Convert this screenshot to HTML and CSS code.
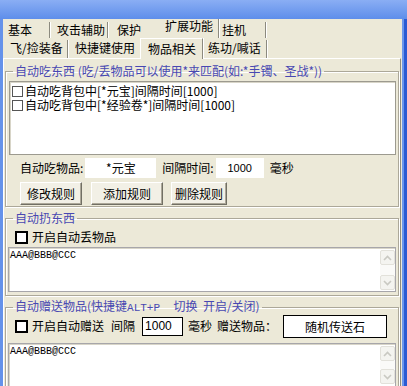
FILE: index.html
```html
<!DOCTYPE html>
<html lang="zh">
<head>
    <meta charset="UTF-8">
    <meta name="viewport" content="width=device-width, initial-scale=1.0">
    <title>物品相关</title>
    <link rel="stylesheet" href="styles.css">
</head>
<body>
    <div class="titlebar"></div>
    <div class="frame">
        <div class="tabs">
            <div class="tab-row back">
                <div class="tab t-basic">基本</div>
                <div class="tab t-attack">攻击辅助</div>
                <div class="tab t-guard">保护</div>
                <div class="tab t-ext">扩展功能</div>
                <div class="tab t-idle">挂机</div>
            </div>
            <div class="tab-row front">
                <div class="tab t-fly">飞/捡装备</div>
                <div class="tab t-hotkey">快捷键使用</div>
                <div class="tab t-items active">物品相关</div>
                <div class="tab t-train">练功/喊话</div>
            </div>
        </div>

        <div class="panel">
            <!-- 自动吃东西 -->
            <fieldset class="group group-eat">
                <legend>自动吃东西 (吃/丢物品可以使用*来匹配(如:*手镯、圣战*))</legend>
                <div class="listbox">
                    <div class="item"><span class="check-small"></span>自动吃背包中[*元宝]间隔时间[1000]</div>
                    <div class="item"><span class="check-small"></span>自动吃背包中[*经验卷*]间隔时间[1000]</div>
                </div>
                <div class="field-row">
                    <span class="lbl">自动吃物品:</span>
                    <span class="edit edit-item">*元宝</span>
                    <span class="lbl lbl-gap">间隔时间:</span>
                    <span class="edit edit-ms">1000</span>
                    <span class="lbl lbl-gap">毫秒</span>
                </div>
                <div class="button-row">
                    <button class="btn btn-edit">修改规则</button>
                    <button class="btn btn-add">添加规则</button>
                    <button class="btn btn-del">删除规则</button>
                </div>
            </fieldset>

            <!-- 自动扔东西 -->
            <fieldset class="group group-drop">
                <legend>自动扔东西</legend>
                <div class="check-row">
                    <span class="check-big"></span>
                    <span>开启自动丢物品</span>
                </div>
                <div class="memo memo-drop">
                    <div class="memo-text">AAA@BBB@CCC</div>
                    <div class="scrollbar">
                        <span class="sb-btn"><svg width="9" height="6" viewBox="0 0 9 6"><path d="M1 5 L4.5 1.5 L8 5" fill="none" stroke="#c9c9c2" stroke-width="1.6"/></svg></span>
                        <span class="sb-track"></span>
                        <span class="sb-btn"><svg width="9" height="6" viewBox="0 0 9 6"><path d="M1 1 L4.5 4.5 L8 1" fill="none" stroke="#c9c9c2" stroke-width="1.6"/></svg></span>
                    </div>
                </div>
            </fieldset>

            <!-- 自动赠送物品 -->
            <fieldset class="group group-give">
                <legend>自动赠送物品(快捷键<span class="mono">ALT+P</span>&nbsp;&nbsp;&nbsp;&nbsp; 切换&nbsp; 开启/关闭)</legend>
                <div class="check-row give-row">
                    <span class="check-big"></span>
                    <span>开启自动赠送</span>
                    <span class="give-gap">间隔</span>
                    <span class="box box-ms">1000</span>
                    <span class="give-ms">毫秒</span>
                    <span class="give-gap2">赠送物品：</span>
                    <span class="box box-item">随机传送石</span>
                </div>
                <div class="memo memo-give">
                    <div class="memo-text">AAA@BBB@CCC</div>
                    <div class="scrollbar">
                        <span class="sb-btn"><svg width="9" height="6" viewBox="0 0 9 6"><path d="M1 5 L4.5 1.5 L8 5" fill="none" stroke="#c9c9c2" stroke-width="1.6"/></svg></span>
                        <span class="sb-track"></span>
                        <span class="sb-btn"><svg width="9" height="6" viewBox="0 0 9 6"><path d="M1 1 L4.5 4.5 L8 1" fill="none" stroke="#c9c9c2" stroke-width="1.6"/></svg></span>
                    </div>
                </div>
            </fieldset>
        </div>
    </div>
</body>
</html>
```

FILE: styles.css
```css
/* XP style dialog, tab page "物品相关" */
* {
    box-sizing: border-box;
}
body {
    margin: 0;
    width: 407px;
    height: 386px;
    overflow: hidden;
    background: #ece9d8;
    font-family: "Noto Sans CJK SC", sans-serif;
    font-size: 12px;
    line-height: 14px;
    color: #000;
}
.titlebar {
    height: 19px;
    background: linear-gradient(#8aaef4, #5e8eea);
}
.frame {
    height: 367px;
    border-left: 3px solid #6592ea;
    border-right: 3px solid #2a5bd3;
    padding-right: 2px;
    box-shadow: inset -2px 0 0 #6c97ec;
}

/* tabs */
.tab-row {
    display: flex;
    height: 19px;
}
.tab-row.front {
    height: 20px;
}
.tab {
    height: 16px;
    margin-top: 3px;
    padding-top: 1px;
    white-space: nowrap;
    border-right: 1px solid #8c8a7f;
    box-shadow: 1px 0 0 #fff;
}
.front .tab {
    height: 18px;
    margin-top: 2px;
    padding-top: 1px;
}
.t-basic { width: 47px; padding-left: 5px; }
.t-attack { width: 58px; padding-left: 7px; }
.t-guard { width: 50px; padding-left: 9px; border-right-color: transparent; box-shadow: none; }
.t-ext { width: 61px; padding-left: 7px; }
.t-ext { padding-top: 0; margin-top: 0; height: 19px; }
.t-idle { width: 47px; padding-left: 3px; }
.t-fly { width: 65px; padding-left: 7px; }
.t-hotkey { width: 72px; padding-left: 7px; border-right-color: transparent; box-shadow: none; }
.t-items { width: 63px; padding-left: 7px; }
.t-train { width: 64px; padding-left: 5px; }
.front .tab.active {
    height: 21px;
    margin-top: 0;
    padding-top: 3px;
    position: relative;
    background: #ece9d8;
    border-top: 1px solid #fff;
    border-left: 1px solid #fff;
    margin-bottom: -1px;
}

/* page */
.panel {
    height: 329px;
    margin-right: 1px;
    padding: 0 1px;
    border-top: 1px solid #fff;
    border-left: 1px solid #fff;
    border-right: 1px solid #8c8a7f;
}
.group {
    margin: 5px 0 0;
    padding: 0 2px 1px;
    min-width: 0;
    border: 1px solid #aca899;
    box-shadow: inset 1px 1px 0 #fff, 1px 1px 0 #fff;
}
.group legend {
    margin-left: 5px;
    padding: 0 2px;
    color: #4848b2;
    line-height: 14px;
    white-space: nowrap;
}
.group-drop {
    margin-top: 4px;
    padding-bottom: 3px;
}
.group-give {
    margin-top: 3px;
}
.mono {
    font-family: "Liberation Mono", monospace;
    font-size: 11px;
}

.listbox {
    height: 74px;
    margin: 3px 0 0 1px;
    padding: 2px 0 0 1px;
    background: #fff;
    border: 1px solid #9c9a8f;
    box-shadow: inset 1px 1px 0 #d8d5c8;
}
.item {
    display: flex;
    align-items: center;
    gap: 2px;
    height: 14px;
    white-space: nowrap;
}
.check-small {
    width: 11px;
    height: 11px;
    margin-left: 1px;
    border: 1px solid #555;
    background: #fff;
}

.field-row {
    display: flex;
    align-items: center;
    height: 20px;
    margin-top: 3px;
    padding-left: 12px;
    white-space: nowrap;
}
.edit {
    height: 20px;
    line-height: 20px;
    background: #fff;
    text-align: center;
    margin-left: 2px;
}
.edit-item { width: 71px; }
.edit-ms {
    width: 48px;
    font-family: "Liberation Sans", sans-serif;
    font-size: 11px;
}
.lbl-gap {
    margin-left: 6px;
}

.button-row {
    display: flex;
    gap: 9px;
    margin-top: 4px;
    padding-left: 12px;
}
.btn {
    height: 23px;
    padding: 0;
    font-family: inherit;
    font-size: 12px;
    color: #000;
    background: #f2f0e6;
    border: 1px solid;
    border-color: #fff #716f64 #716f64 #fff;
    box-shadow: inset -1px -1px 0 #aca899;
}
.btn-edit { width: 62px; }
.btn-add { width: 72px; }
.btn-del { width: 56px; margin-left: -1px; }

.check-row {
    display: flex;
    align-items: center;
    gap: 4px;
    height: 16px;
    margin-top: 4px;
    padding-left: 7px;
    white-space: nowrap;
}
.check-big {
    width: 13px;
    height: 13px;
    border: 2px solid #000;
    background: #fff;
}

.memo {
    display: flex;
    margin-top: 2px;
    background: #fff;
    border: 1px solid #a7a6aa;
    box-shadow: inset 1px 1px 0 #d8d5c8;
}
.memo-drop {
    height: 45px;
}
.memo-give {
    height: 60px;
    margin-top: 6px;
}
.memo-text {
    flex: 1;
    padding: 2px 0 0 1px;
    font-family: "Liberation Mono", monospace;
    font-size: 10px;
    line-height: 12px;
}
.scrollbar {
    display: flex;
    flex-direction: column;
    width: 15px;
    margin: 2px 0 0;
}
.sb-btn {
    display: flex;
    align-items: center;
    justify-content: center;
    height: 15px;
    background: #f4f4f0;
    border: 1px solid #e2e1da;
    border-radius: 2px;
}
.sb-track {
    height: 10px;
    background: #fafaf8;
}
.memo-give .sb-track {
    height: 8px;
}

.give-row {
    height: 22px;
    margin-top: 0;
}
.give-gap {
    margin-left: 3px;
}
.box {
    height: 19px;
    line-height: 17px;
    background: #fff;
    border: 1px solid #000;
}
.box-ms {
    width: 41px;
    margin-left: 3px;
    padding-left: 2px;
    font-family: "Liberation Sans", sans-serif;
    font-size: 12px;
}
.give-ms {
    margin-left: 1px;
}
.give-gap2 {
    margin-left: 1px;
}
.box-item {
    width: 104px;
    height: 23px;
    line-height: 21px;
    margin-left: 2px;
    text-align: center;
}
```
